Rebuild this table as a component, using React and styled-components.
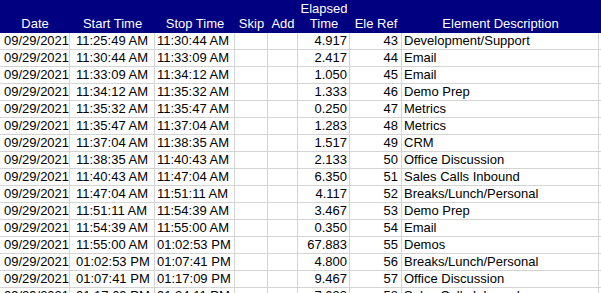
import styled, { createGlobalStyle } from 'styled-components'

const GlobalStyle = createGlobalStyle`
	html, body {
		margin: 0;
		padding: 0;
		background: #fff;
		overflow: hidden;
	}
	body {
		font-family: "Liberation Sans", Arial, sans-serif;
	}
`

const columns = [
	{ key: 'date', width: 70, align: 'left', pad: '0 0 0 4px' },
	{ key: 'start', width: 85, align: 'left', pad: '0 0 0 6px' },
	{ key: 'stop', width: 80, align: 'left', pad: '0 0 0 2px' },
	{ key: 'skip', width: 33, align: 'left', pad: '0' },
	{ key: 'add', width: 30, align: 'left', pad: '0' },
	{ key: 'time', width: 52, align: 'right', pad: '0 2px 0 0' },
	{ key: 'ref', width: 52, align: 'right', pad: '0 3px 0 0' },
	{ key: 'desc', width: 197, align: 'left', pad: '0 0 0 2px' },
]

const headers = [
	['', 'Date'],
	['', 'Start Time'],
	['', 'Stop Time'],
	['', 'Skip'],
	['', 'Add'],
	['Elapsed', 'Time'],
	['', 'Ele Ref'],
	['', 'Element Description'],
]

const rows = [
	['11:25:49 AM', '11:30:44 AM', '4.917', 43, 'Development/Support'],
	['11:30:44 AM', '11:33:09 AM', '2.417', 44, 'Email'],
	['11:33:09 AM', '11:34:12 AM', '1.050', 45, 'Email'],
	['11:34:12 AM', '11:35:32 AM', '1.333', 46, 'Demo Prep'],
	['11:35:32 AM', '11:35:47 AM', '0.250', 47, 'Metrics'],
	['11:35:47 AM', '11:37:04 AM', '1.283', 48, 'Metrics'],
	['11:37:04 AM', '11:38:35 AM', '1.517', 49, 'CRM'],
	['11:38:35 AM', '11:40:43 AM', '2.133', 50, 'Office Discussion'],
	['11:40:43 AM', '11:47:04 AM', '6.350', 51, 'Sales Calls Inbound'],
	['11:47:04 AM', '11:51:11 AM', '4.117', 52, 'Breaks/Lunch/Personal'],
	['11:51:11 AM', '11:54:39 AM', '3.467', 53, 'Demo Prep'],
	['11:54:39 AM', '11:55:00 AM', '0.350', 54, 'Email'],
	['11:55:00 AM', '01:02:53 PM', '67.883', 55, 'Demos'],
	['01:02:53 PM', '01:07:41 PM', '4.800', 56, 'Breaks/Lunch/Personal'],
	['01:07:41 PM', '01:17:09 PM', '9.467', 57, 'Office Discussion'],
	['01:17:09 PM', '01:24:11 PM', '7.033', 58, 'Sales Calls Inbound'],
]

export default function App() {
	return (
		<>
			<GlobalStyle />
			<Sheet>
				<HeaderRow>
					{headers.map((h, i) => (
						<HeadCell key={i} $w={columns[i].width}>
							<HeadLine>{h[0] || '\u00a0'}</HeadLine>
							<HeadLine>{h[1]}</HeadLine>
						</HeadCell>
					))}
					<HeadFill />
				</HeaderRow>
				{rows.map((r, i) => {
					const values = ['09/29/2021', r[0], r[1], '', '', r[2], r[3], r[4]]
					return (
						<Row key={i}>
							{values.map((v, j) => (
								<Cell
									key={j}
									$w={columns[j].width}
									$align={columns[j].align}
									$pad={columns[j].pad}
								>
									{v}
								</Cell>
							))}
							<Fill />
						</Row>
					)
				})}
			</Sheet>
		</>
	)
}

const Sheet = styled.div`
	width: 601px;
	height: 293px;
	overflow: hidden;
	font-size: 13px;
	color: #000;
`

const HeaderRow = styled.div`
	display: flex;
	height: 33px;
	background: #000080;
	color: #fff;
`

const HeadCell = styled.div`
	flex: 0 0 ${p => p.$w}px;
	display: flex;
	flex-direction: column;
	justify-content: flex-end;
	align-items: center;
	line-height: 15px;
	padding-bottom: 2px;
	white-space: nowrap;
`

const HeadLine = styled.span``

const HeadFill = styled.div`
	flex: 1;
`

const Row = styled.div`
	display: flex;
	height: 17px;
	box-sizing: border-box;
	border-bottom: 1px solid #d4d4d4;
`

const Cell = styled.div`
	flex: 0 0 ${p => p.$w}px;
	box-sizing: border-box;
	border-right: 1px solid #d4d4d4;
	text-align: ${p => p.$align};
	padding: ${p => p.$pad};
	line-height: 16px;
	white-space: nowrap;
	overflow: hidden;
`

const Fill = styled.div`
	flex: 1;
`
